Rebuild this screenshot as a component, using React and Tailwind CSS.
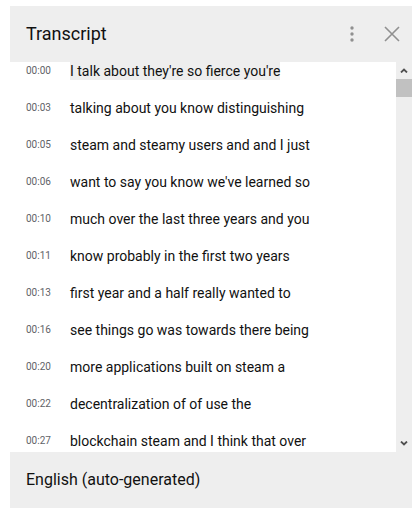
import React from "react";

const lines = [
  { t: "00:00", text: "I talk about they're so fierce you're", active: true },
  { t: "00:03", text: "talking about you know distinguishing" },
  { t: "00:05", text: "steam and steamy users and and I just" },
  { t: "00:06", text: "want to say you know we've learned so" },
  { t: "00:10", text: "much over the last three years and you" },
  { t: "00:11", text: "know probably in the first two years" },
  { t: "00:13", text: "first year and a half really wanted to" },
  { t: "00:16", text: "see things go was towards there being" },
  { t: "00:20", text: "more applications built on steam a" },
  { t: "00:22", text: "decentralization of of use the" },
  { t: "00:27", text: "blockchain steam and I think that over" },
];

const App = () => {
  return (
    <div className="w-[413px] h-[514px] bg-white pt-[6px] pl-[10px]" style={{ fontFamily: "Roboto, 'Noto Sans', sans-serif" }}>
      <div className="w-[402px] h-[502px] flex flex-col">
        {/* Header */}
        <div className="h-[56px] bg-[#eeeeee] flex items-center pl-[16px] pr-[8px]">
          <h2 className="flex-1 text-[18px] text-[#111111] leading-none">Transcript</h2>
          <button type="button" className="w-[24px] h-[24px] flex items-center justify-center mr-[16px]">
            <svg width="4" height="16" viewBox="0 0 4 16">
              <circle cx="2" cy="2" r="1.7" fill="#909090" />
              <circle cx="2" cy="8" r="1.7" fill="#909090" />
              <circle cx="2" cy="14" r="1.7" fill="#909090" />
            </svg>
          </button>
          <button type="button" className="w-[24px] h-[24px] flex items-center justify-center">
            <svg width="16" height="16" viewBox="0 0 16 16">
              <path d="M1 1 L15 15 M15 1 L1 15" stroke="#909090" strokeWidth="1.6" />
            </svg>
          </button>
        </div>

        {/* Body */}
        <div className="h-[390px] flex">
          <div className="flex-1 bg-white overflow-hidden">
            <div className="-mt-[10px]">
              {lines.map((l) => (
                <div key={l.t} className="h-[37px] flex items-center pl-[16px]">
                  <span className="w-[44px] text-[10px] text-[#5f6368]">{l.t}</span>
                  <span className={`inline-block leading-[18px] text-[14px] text-[#111111] ${l.active ? "bg-[#eeeeee]" : ""}`}>{l.text}</span>
                </div>
              ))}
            </div>
          </div>
          {/* Scrollbar */}
          <div className="w-[16px] bg-[#eeeeee] flex flex-col">
            <div className="h-[17px] flex items-center justify-center">
              <svg width="8" height="5" viewBox="0 0 8 5">
                <path d="M1 4.5 L4 1.5 L7 4.5" stroke="#505050" strokeWidth="1.8" fill="none" />
              </svg>
            </div>
            <div className="h-[18px] bg-[#c1c1c1]" />
            <div className="flex-1" />
            <div className="h-[17px] flex items-center justify-center">
              <svg width="8" height="5" viewBox="0 0 8 5">
                <path d="M1 0.5 L4 3.5 L7 0.5" stroke="#505050" strokeWidth="1.8" fill="none" />
              </svg>
            </div>
          </div>
        </div>

        {/* Footer */}
        <div className="h-[56px] bg-[#eeeeee] flex items-center pl-[16px]">
          <span className="text-[16px] text-[#111111]">English (auto-generated)</span>
        </div>
      </div>
    </div>
  );
};

export default App;
